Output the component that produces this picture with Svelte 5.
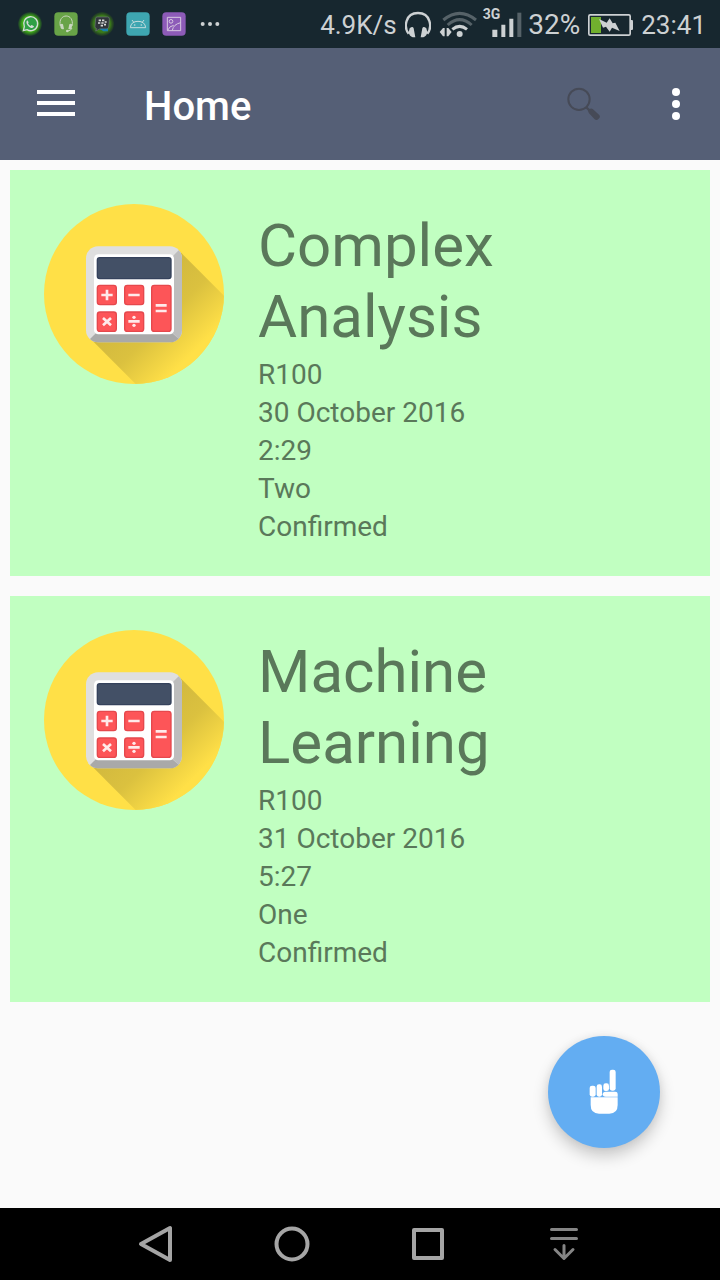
<script>
  const bookings = [
    { subject: 'Complex Analysis', price: 'R100', date: '30 October 2016', time: '2:29', hours: 'Two', status: 'Confirmed' },
    { subject: 'Machine Learning', price: 'R100', date: '31 October 2016', time: '5:27', hours: 'One', status: 'Confirmed' }
  ];
</script>

{#snippet calculator()}
  <svg class="calculator" viewBox="30 27 540 540" aria-hidden="true">
    <defs>
      <clipPath id="disc"><circle cx="300" cy="297" r="270" /></clipPath>
      <linearGradient id="shade" gradientUnits="userSpaceOnUse" x1="310" y1="310" x2="475" y2="475">
        <stop offset="0" stop-color="#d2b93e" />
        <stop offset="0.45" stop-color="#dbc13f" />
        <stop offset="1" stop-color="#ffe047" />
      </linearGradient>
    </defs>
    <circle cx="300" cy="297" r="270" fill="#ffe047" />
    <path d="M168 430 L434 166 L634 366 L368 630Z" fill="url(#shade)" clip-path="url(#disc)" />
    <rect x="156" y="154" width="288" height="288" rx="36" fill="#dfdfdf" />
    <path d="M434 166 Q444 176 444 190 V406 Q444 420 434 431 L410 408 V190Z" fill="#bdbdbd" />
    <path d="M168 432 L190 410 H410 L434 431 Q423 442 408 442 H192 Q178 442 168 432Z" fill="#a9a9a9" />
    <rect x="180" y="178" width="240" height="240" rx="13" fill="#fff" />
    <rect x="190" y="188" width="221" height="63" rx="7" fill="#435066" stroke="#35425c" stroke-width="4" />
    <g fill="#fd5558" stroke="#e5484d" stroke-width="4">
      <rect x="190" y="271" width="57" height="58" rx="8" />
      <rect x="272" y="271" width="57" height="58" rx="8" />
      <rect x="190" y="351" width="57" height="58" rx="8" />
      <rect x="272" y="351" width="57" height="58" rx="8" />
      <rect x="353" y="271" width="58" height="138" rx="8" />
    </g>
    <g fill="none" stroke="#ffeaea" stroke-width="8">
      <path d="M202 300H236M219 284V316M283 300H317M207 369L231 391M231 369L207 391M283 379H317M365 331H398M365 348H398" />
    </g>
    <circle cx="300" cy="367" r="5" fill="#ffeaea" />
    <circle cx="300" cy="391" r="5" fill="#ffeaea" />
  </svg>
{/snippet}

<div class="screen">
  <div class="status">
    <div class="notices">
      <svg width="24" height="24" viewBox="54 36 72 72" aria-hidden="true">
        <defs>
          <radialGradient id="glow"><stop offset="0.65" stop-color="#3fae16" /><stop offset="1" stop-color="#3fae16" stop-opacity="0.1" /></radialGradient>
        </defs>
        <circle cx="90" cy="72" r="36" fill="url(#glow)" />
        <path d="M70 92L73 80A21 21 0 1 1 81 89Z" fill="#2fa045" stroke="#d5dcd8" stroke-width="4" />
        <path d="M82 61C76 66 81 75 87 80C93 85 100 86 102 79L95 75L91 78Q86 75 84 70L86 67Z" fill="#d5dcd8" />
      </svg>
      <svg width="24" height="24" viewBox="162 36 72 72" aria-hidden="true">
        <rect x="163" y="37" width="70" height="70" rx="12" fill="#68a347" />
        <path d="M181 78C172 38 225 38 216 78M216 84Q213 93 202 93" fill="none" stroke="#c9d6bf" stroke-width="3" />
        <path d="M180 73Q187 70 189 73L192 87Q186 90 182 84ZM217 73Q210 70 208 73L205 87Q211 90 215 84Z" fill="#c9d6bf" />
        <circle cx="202" cy="93" r="4" fill="#c9d6bf" />
      </svg>
      <svg width="24" height="24" viewBox="270 36 72 72" aria-hidden="true">
        <defs>
          <radialGradient id="halo"><stop offset="0.7" stop-color="#3a7a1a" /><stop offset="1" stop-color="#2d5719" stop-opacity="0.3" /></radialGradient>
        </defs>
        <circle cx="306" cy="72" r="36" fill="url(#halo)" />
        <path d="M291 51H323Q329 51 328 58L326 81Q325 87 319 87H299L287 93L290 86Q284 85 285 79L287 56Q287 51 291 51Z" fill="#30353a" stroke="#6a7478" stroke-width="2" />
        <path d="M298 86H324V94H310Z" fill="#197fae" />
        <path d="M296 61H303M306 61H313M294 69H301M304 69H311M314 66H320M302 77H309M312 74H318" stroke="#d7d9da" stroke-width="5" />
      </svg>
      <svg width="24" height="24" viewBox="378 36 72 72" aria-hidden="true">
        <rect x="379" y="37" width="70" height="70" rx="12" fill="#3ea6b1" />
        <path d="M391 83Q393 64 414 64Q435 64 437 83ZM396 60L402 68M432 60L426 68" fill="none" stroke="#c3dcdd" stroke-width="3" />
        <circle cx="404" cy="75" r="2.5" fill="#c3dcdd" /><circle cx="424" cy="75" r="2.5" fill="#c3dcdd" />
      </svg>
      <svg width="24" height="24" viewBox="486 36 72 72" aria-hidden="true">
        <rect x="487" y="37" width="70" height="70" rx="12" fill="#8d5bb8" />
        <path d="M502 52H542V92H502ZM503 91Q508 78 521 76M517 91Q520 73 542 68" fill="none" stroke="#d6c8e0" stroke-width="3" />
        <circle cx="513" cy="64" r="5.500" fill="none" stroke="#d6c8e0" stroke-width="3" />
      </svg>
      <svg width="24" height="24" viewBox="594 36 72 72" fill="#cdd1d3" aria-hidden="true">
        <circle cx="608" cy="72" r="6" /><circle cx="630" cy="72" r="6" /><circle cx="652" cy="72" r="6" />
      </svg>
    </div>
    <div class="system">
      <span>4.9K/s</span>
      <svg width="26" height="28" viewBox="288 30 78 84" aria-hidden="true">
        <path d="M299 98C284 80 288 36 327 36S370 80 355 98" fill="none" stroke="#cdd1d3" stroke-width="7" />
        <path d="M302 82Q311 74 314 82L319 109H311Q301 106 299 94ZM352 82Q343 74 340 82L335 109H343Q353 106 355 94Z" fill="#cdd1d3" />
      </svg>
      <svg width="38" height="28" viewBox="385 33 114 84" aria-hidden="true">
        <g fill="none" stroke-width="9">
          <path d="M398 60Q447 20 496 60M411 75Q447 43 483 75" stroke="#566268" />
          <path d="M425 88Q447 70 469 88" stroke="#cdd1d3" />
        </g>
        <circle cx="447" cy="102" r="9" fill="#cdd1d3" />
        <path d="M387 96L397 84H402V109H397ZM423 96L413 84H408V109H413Z" fill="#cdd1d3" />
      </svg>
      <div class="cell">
        <span class="net">3G</span>
        <svg width="30" height="26" viewBox="545 34 90 78" aria-hidden="true">
          <path d="M546 87H561V109H546ZM573 72H585V109H573ZM597 54H609V109H597Z" fill="#cdd1d3" />
          <path d="M621 36H633V109H621Z" fill="#566268" />
        </svg>
      </div>
      <span class="percent">32%</span>
      <svg width="45" height="24" viewBox="264 36 135 72" aria-hidden="true">
        <rect x="266.500" y="41.500" width="124" height="61" rx="4" fill="none" stroke="#cdd1d3" stroke-width="5" />
        <path d="M392 57H396Q399 57 399 61V83Q399 87 396 87H392Z" fill="#cdd1d3" />
        <path d="M273 48H303V96H273Z" fill="#71b02e" />
        <path d="M297 54L320 65L329 52L338 67L346 65L359 90L336 80L329 92L318 77L309 80Z" fill="#cdd1d3" />
      </svg>
      <time>23:41</time>
    </div>
  </div>

  <header>
    <button class="menu" aria-label="Open menu">
      <svg width="38" height="26" viewBox="0 0 38 26" aria-hidden="true">
        <path d="M0 2H38M0 13H38M0 24H38" stroke="#fff" stroke-width="4" />
      </svg>
    </button>
    <h1>Home</h1>
    <button class="search" aria-label="Search">
      <svg width="34" height="34" viewBox="82 111 102 102" aria-hidden="true">
        <circle cx="118" cy="148" r="32" fill="none" stroke="#464a57" stroke-width="6" />
        <path d="M139 171L150 182" stroke="#464a57" stroke-width="7" />
        <path d="M148 179Q154 173 160 178L178 194Q184 200 177 206Q171 213 165 208L148 190Q143 184 148 179Z" fill="#464a57" />
      </svg>
    </button>
    <button class="more" aria-label="More options">
      <svg width="8" height="32" viewBox="0 0 8 32" fill="#fff" aria-hidden="true">
        <circle cx="4" cy="4" r="4" /><circle cx="4" cy="16" r="4" /><circle cx="4" cy="28" r="4" />
      </svg>
    </button>
  </header>

  <main>
    <ul>
      {#each bookings as b}
        <li>
          {@render calculator()}
          <div class="details">
            <h2>{b.subject}</h2>
            <p>{b.price}</p>
            <p>{b.date}</p>
            <p>{b.time}</p>
            <p>{b.hours}</p>
            <p>{b.status}</p>
          </div>
        </li>
      {/each}
    </ul>
    <button class="fab" aria-label="New booking">
      <svg width="30" height="46" viewBox="178 148 90 138" fill="#fff" aria-hidden="true">
        <rect x="240" y="150" width="18" height="63" rx="7" />
        <rect x="221" y="191" width="17" height="23" rx="7" />
        <rect x="201" y="194" width="16" height="37" rx="7" />
        <rect x="180" y="198" width="18" height="33" rx="7" />
        <path d="M228 216H257Q264 216 264 223V231H228Q219 231 219 224Q219 216 228 216Z" />
        <path d="M183 233H264V256Q264 282 239 282H208Q183 282 183 256Z" />
      </svg>
    </button>
  </main>

  <nav aria-label="System navigation">
    <button aria-label="Back">
      <svg width="40" height="40" viewBox="0 0 40 40" aria-hidden="true"><path d="M34 4V36L5 20Z" /></svg>
    </button>
    <button aria-label="Home">
      <svg width="40" height="40" viewBox="0 0 40 40" aria-hidden="true"><circle cx="20" cy="20" r="15.500" /></svg>
    </button>
    <button aria-label="Recent apps">
      <svg width="40" height="40" viewBox="0 0 40 40" aria-hidden="true"><rect x="6" y="6" width="28" height="28" /></svg>
    </button>
    <button class="hide" aria-label="Hide navigation bar">
      <svg width="40" height="40" viewBox="0 0 40 40" aria-hidden="true"><path d="M7.500 5.500H32.500M7.500 14.500H32.500M20 21.500V34M11 25.500L20 34.500L29 25.500" /></svg>
    </button>
  </nav>
</div>

<style>
  :global(body) {
    margin: 0;
    background: #fafafa;
    font-family: Roboto, 'Liberation Sans', sans-serif;
  }
  .screen {
    min-height: 100vh;
    display: flex;
    flex-direction: column;
  }
  svg {
    display: block;
    flex: none;
  }
  button {
    display: flex;
    align-items: center;
    justify-content: center;
    padding: 0;
    border: 0;
    background: none;
  }
  .status {
    height: 48px;
    padding: 0 14px 0 18px;
    display: flex;
    align-items: center;
    justify-content: space-between;
    background: #17272f;
    color: #cdd1d3;
    font-size: 26px;
    line-height: 48px;
  }
  .notices {
    display: flex;
    gap: 12px;
  }
  .system {
    display: flex;
    align-items: center;
    gap: 8px;
    padding-top: 2px;
  }
  .cell {
    display: flex;
    align-items: flex-start;
    margin-left: -2px;
  }
  .net {
    font-size: 14px;
    font-weight: 700;
    line-height: 12px;
    margin-right: -8px;
    margin-top: -4px;
  }
  .percent {
    margin-left: -2px;
    font-size: 28px;
  }
  header {
    height: 112px;
    display: flex;
    align-items: center;
    background: #555f76;
  }
  .menu {
    width: 112px;
    height: 112px;
    padding-bottom: 2px;
  }
  h1 {
    flex: 1;
    margin: 0;
    padding: 6px 0 0 32px;
    color: #fff;
    font-size: 40px;
    font-weight: 500;
    line-height: 48px;
  }
  .search {
    width: 96px;
    height: 96px;
  }
  .more {
    width: 88px;
    height: 96px;
  }
  main {
    flex: 1;
    position: relative;
  }
  ul {
    margin: 0;
    padding: 10px;
    display: flex;
    flex-direction: column;
    gap: 20px;
    list-style: none;
  }
  li {
    display: flex;
    align-items: flex-start;
    gap: 34px;
    padding: 34px 34px 30px;
    background: #c1ffc1;
    color: #5a785a;
  }
  .calculator {
    width: 180px;
    height: 180px;
  }
  .details {
    flex: 1;
    min-width: 0;
    padding-top: 6px;
  }
  h2 {
    margin: 0 0 4px;
    font-size: 60px;
    font-weight: 400;
    line-height: 71px;
  }
  p {
    margin: 0;
    font-size: 28px;
    line-height: 38px;
  }
  .fab {
    position: absolute;
    right: 60px;
    bottom: 60px;
    width: 112px;
    height: 112px;
    border-radius: 50%;
    background: #63adf2;
    box-shadow: 0 8px 16px rgba(0, 0, 0, 0.2), 0 0 8px rgba(0, 0, 0, 0.06);
  }
  nav {
    height: 72px;
    padding: 0 88px;
    display: flex;
    background: #000;
  }
  nav button {
    flex: 1;
  }
  nav svg {
    fill: none;
    stroke: #a5a5a5;
    stroke-width: 4;
    stroke-linejoin: round;
  }
  .hide svg {
    stroke: #858585;
    stroke-width: 3;
    stroke-linecap: round;
  }
</style>
